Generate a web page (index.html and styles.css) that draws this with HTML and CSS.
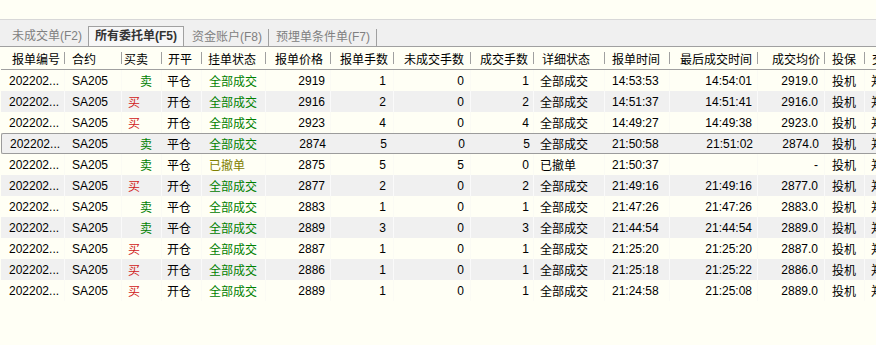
FILE: index.html
```html
<!DOCTYPE html>
<html lang="zh-CN">
<head>
    <meta charset="UTF-8">
    <title>委托单</title>
    <link rel="stylesheet" href="styles.css">
</head>
<body>
    <div class="topbar"></div>

    <div class="tabbar">
        <div class="tab">未成交单(F2)</div>
        <div class="tab active">所有委托单(F5)</div>
        <div class="tab sep">资金账户(F8)</div>
        <div class="tab sep">预埋单条件单(F7)</div>
    </div>

    <div class="grid-wrap">
        <table class="orders">
            <colgroup>
                <col style="width:64px"><col style="width:57px"><col style="width:40px"><col style="width:40px">
                <col style="width:64px"><col style="width:65px"><col style="width:63px"><col style="width:77px">
                <col style="width:63px"><col style="width:71px"><col style="width:65px"><col style="width:88px">
                <col style="width:67px"><col style="width:40px"><col style="width:75px">
            </colgroup>
            <thead>
                <tr>
                    <th>报单编号</th><th>合约</th><th>买卖</th><th>开平</th><th>挂单状态</th>
                    <th>报单价格</th><th>报单手数</th><th>未成交手数</th><th>成交手数</th><th>详细状态</th>
                    <th>报单时间</th><th>最后成交时间</th><th>成交均价</th><th>投保</th><th>交易所</th>
                </tr>
            </thead>
            <tbody>
                <tr><td>202202...</td><td>SA205</td><td class="sell">卖</td><td>平仓</td><td class="done">全部成交</td><td>2919</td><td>1</td><td>0</td><td>1</td><td>全部成交</td><td>14:53:53</td><td>14:54:01</td><td>2919.0</td><td>投机</td><td>郑商所</td></tr>
                <tr><td>202202...</td><td>SA205</td><td class="buy">买</td><td>开仓</td><td class="done">全部成交</td><td>2916</td><td>2</td><td>0</td><td>2</td><td>全部成交</td><td>14:51:37</td><td>14:51:41</td><td>2916.0</td><td>投机</td><td>郑商所</td></tr>
                <tr><td>202202...</td><td>SA205</td><td class="buy">买</td><td>开仓</td><td class="done">全部成交</td><td>2923</td><td>4</td><td>0</td><td>4</td><td>全部成交</td><td>14:49:27</td><td>14:49:38</td><td>2923.0</td><td>投机</td><td>郑商所</td></tr>
                <tr class="selected"><td>202202...</td><td>SA205</td><td class="sell">卖</td><td>平仓</td><td class="done">全部成交</td><td>2874</td><td>5</td><td>0</td><td>5</td><td>全部成交</td><td>21:50:58</td><td>21:51:02</td><td>2874.0</td><td>投机</td><td>郑商所</td></tr>
                <tr><td>202202...</td><td>SA205</td><td class="sell">卖</td><td>平仓</td><td class="cancel">已撤单</td><td>2875</td><td>5</td><td>5</td><td>0</td><td>已撤单</td><td>21:50:37</td><td></td><td>-</td><td>投机</td><td>郑商所</td></tr>
                <tr><td>202202...</td><td>SA205</td><td class="buy">买</td><td>开仓</td><td class="done">全部成交</td><td>2877</td><td>2</td><td>0</td><td>2</td><td>全部成交</td><td>21:49:16</td><td>21:49:16</td><td>2877.0</td><td>投机</td><td>郑商所</td></tr>
                <tr><td>202202...</td><td>SA205</td><td class="sell">卖</td><td>平仓</td><td class="done">全部成交</td><td>2883</td><td>1</td><td>0</td><td>1</td><td>全部成交</td><td>21:47:26</td><td>21:47:26</td><td>2883.0</td><td>投机</td><td>郑商所</td></tr>
                <tr><td>202202...</td><td>SA205</td><td class="sell">卖</td><td>平仓</td><td class="done">全部成交</td><td>2889</td><td>3</td><td>0</td><td>3</td><td>全部成交</td><td>21:44:54</td><td>21:44:54</td><td>2889.0</td><td>投机</td><td>郑商所</td></tr>
                <tr><td>202202...</td><td>SA205</td><td class="buy">买</td><td>开仓</td><td class="done">全部成交</td><td>2887</td><td>1</td><td>0</td><td>1</td><td>全部成交</td><td>21:25:20</td><td>21:25:20</td><td>2887.0</td><td>投机</td><td>郑商所</td></tr>
                <tr><td>202202...</td><td>SA205</td><td class="buy">买</td><td>开仓</td><td class="done">全部成交</td><td>2886</td><td>1</td><td>0</td><td>1</td><td>全部成交</td><td>21:25:18</td><td>21:25:22</td><td>2886.0</td><td>投机</td><td>郑商所</td></tr>
                <tr><td>202202...</td><td>SA205</td><td class="buy">买</td><td>开仓</td><td class="done">全部成交</td><td>2889</td><td>1</td><td>0</td><td>1</td><td>全部成交</td><td>21:24:58</td><td>21:25:08</td><td>2889.0</td><td>投机</td><td>郑商所</td></tr>
            </tbody>
        </table>
    </div>
</body>
</html>
```

FILE: styles.css
```css
body {
    margin: 0;
    background: #fffff5;
    font-family: "Liberation Sans", Arial, "Noto Sans CJK SC", sans-serif;
    font-size: 12px;
    color: #000;
    width: 876px;
    overflow: hidden;
}
.topbar {
    height: 19px;
}
.tabbar {
    display: flex;
    align-items: flex-end;
    height: 26px;
    padding-left: 4px;
    background: #f0f0f0;
    border-top: 1px solid #d8d8d8;
    border-bottom: 1px solid #a0a0a0;
}
.tab {
    height: 19px;
    line-height: 19px;
    padding: 0 6px 0 8px;
    color: #808080;
    white-space: nowrap;
}
.tab.sep {
    border-right: 1px solid #a0a0a0;
    height: 17px;
    line-height: 17px;
    margin-left: 0;
}
.tab.sep + .tab.sep {
    padding-left: 7px;
}
.tab.active {
    height: 19px;
    padding: 0 6px;
    border: 1px solid #a0a0a0;
    border-bottom: none;
    background: #f7f7f7;
    color: #333;
    font-weight: bold;
}
.grid-wrap {
    width: 876px;
    overflow: hidden;
    padding-left: 1px;
}
.orders {
    table-layout: fixed;
    width: 939px;
    border-collapse: separate;
    border-spacing: 0;
}
.orders th, .orders td {
    white-space: nowrap;
    overflow: hidden;
    padding: 0;
}
.orders th {
    height: 22px;
    font-weight: normal;
    text-align: left;
    border-bottom: 1px solid #a0a0a0;
    background: linear-gradient(#a0a0a0, #a0a0a0) right center / 1px 12px no-repeat;
}
.orders td {
    height: 21px;
    border-right: 1px solid #fbfbf4;
}
.orders tbody tr:nth-child(even) td {
    background: #f0f0f0;
    border-right-color: #fafafa;
}
.orders tr.selected td {
    background: linear-gradient(#fbfbfb, #e9e9e9);
    border-top: 1px solid #9c9c9c;
    border-bottom: 1px solid #9c9c9c;
    border-right: none;
    height: 19px;
}
.orders tr.selected td:first-child {
    border-left: 1px solid #9c9c9c;
    border-radius: 2px 0 0 2px;
}

/* header columns */
.orders th:nth-child(1) { padding-left: 11px; }
.orders th:nth-child(2) { padding-left: 7px; }
.orders th:nth-child(3) { padding-left: 2px; }
.orders th:nth-child(4) { padding-left: 6px; }
.orders th:nth-child(5) { padding-left: 6px; }
.orders th:nth-child(6) { text-align: right; padding-right: 8px; }
.orders th:nth-child(7) { text-align: right; padding-right: 6px; }
.orders th:nth-child(8) { text-align: right; padding-right: 7px; }
.orders th:nth-child(9) { text-align: right; padding-right: 6px; }
.orders th:nth-child(10) { padding-left: 8px; }
.orders th:nth-child(11) { padding-left: 7px; }
.orders th:nth-child(12) { text-align: right; padding-right: 6px; }
.orders th:nth-child(13) { text-align: right; padding-right: 5px; }
.orders th:nth-child(14) { padding-left: 7px; }
.orders th:nth-child(15) { padding-left: 7px; }

/* body columns */
.orders td:nth-child(1) { padding-left: 8px; }
.orders td:nth-child(2) { padding-left: 7px; }
.orders td:nth-child(4) { padding-left: 5px; }
.orders td:nth-child(5) { padding-left: 7px; }
.orders td:nth-child(6) { text-align: right; padding-right: 5px; }
.orders td:nth-child(7) { text-align: right; padding-right: 7px; }
.orders td:nth-child(8) { text-align: right; padding-right: 6px; }
.orders td:nth-child(9) { text-align: right; padding-right: 4px; }
.orders td:nth-child(10) { padding-left: 6px; }
.orders td:nth-child(11) { padding-left: 7px; }
.orders td:nth-child(12) { text-align: right; padding-right: 5px; }
.orders td:nth-child(13) { text-align: right; padding-right: 6px; }
.orders td:nth-child(14) { padding-left: 7px; }
.orders td:nth-child(15) { padding-left: 6px; }

.orders td.buy { color: #d02020; padding-left: 6px; }
.orders td.sell { color: #008000; padding-left: 18px; }
.orders td.done { color: #008000; }
.orders td.cancel { color: #808000; }
```
